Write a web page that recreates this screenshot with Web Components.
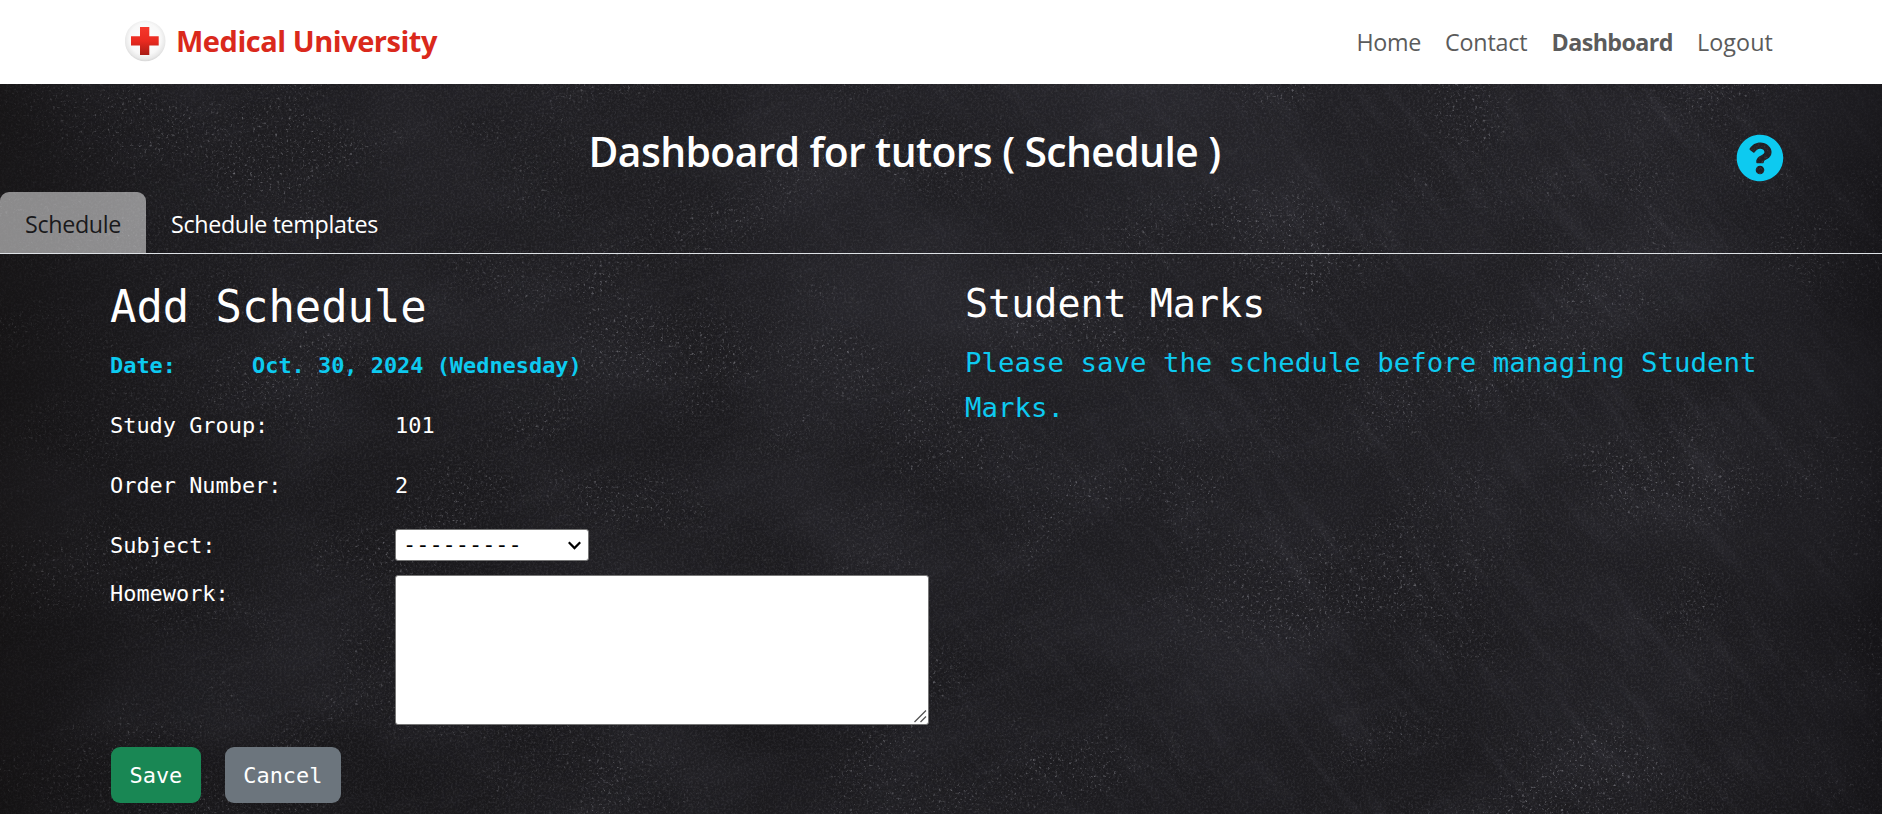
<!DOCTYPE html>
<html lang="en">
<head>
<meta charset="utf-8">
<title>Medical University</title>
<style>
  html, body { margin: 0; height: 100%; overflow: hidden; background: #1e1d21; }
  body { font-family: "Open Sans", "Noto Sans", sans-serif; font-size: 23.3px; color: #fff; }
</style>
</head>
<body>
<mu-page>
  <mu-header slot="header"></mu-header>
  <mu-title></mu-title>
  <mu-tabs></mu-tabs>
  <mu-columns>
    <mu-schedule-form slot="left"></mu-schedule-form>
    <mu-marks slot="right"></mu-marks>
  </mu-columns>
</mu-page>
<script>
const define = (name, html, after) => {
  const template = document.createElement('template');
  template.innerHTML = html;
  customElements.define(name, class extends HTMLElement {
    constructor() {
      super();
      this.attachShadow({ mode: 'open' }).append(template.content.cloneNode(true));
    }
    connectedCallback() { if (after) after(this); }
  });
};

/* Inline label that spreads its letters over a given advance width. */
define('fit-text', `<style>
  :host { display: inline-block; white-space: pre; }
  span { display: inline-block; }
</style><span><slot></slot></span>`, host => {
  const want = parseFloat(host.getAttribute('width'));
  const natural = host.shadowRoot.querySelector('span').getBoundingClientRect().width;
  const count = host.textContent.length;
  if (want && natural && count) host.style.letterSpacing = ((want - natural) / count) + 'px';
});

/* Chalkboard surface: soft smudges, diagonal streaks and chalk dust. */
define('chalk-board', `<style>
  :host { display: block; overflow: hidden; background: #1e1d21; }
  svg { display: block; width: 1882px; height: 730px; }
</style>
<svg viewBox="0 0 1882 730" aria-hidden="true">
  <defs>
    <filter id="grain" x="0" y="0" width="100%" height="100%" color-interpolation-filters="sRGB">
      <feTurbulence type="fractalNoise" baseFrequency=".45" numOctaves="3" seed="4"/>
      <feColorMatrix values="0 0 0 0 .55  0 0 0 0 .55  0 0 0 0 .58  .9 0 0 0 -.38"/>
    </filter>
    <filter id="dust" x="0" y="0" width="100%" height="100%" color-interpolation-filters="sRGB">
      <feTurbulence type="fractalNoise" baseFrequency=".36" numOctaves="2" seed="21" result="n"/>
      <feColorMatrix in="n" values="0 0 0 0 .66  0 0 0 0 .66  0 0 0 0 .69  3.4 0 0 0 -2.1" result="dots"/>
      <feTurbulence type="fractalNoise" baseFrequency=".006 .009" numOctaves="4" seed="8"/>
      <feColorMatrix values="0 0 0 0 1  0 0 0 0 1  0 0 0 0 1  3.2 0 0 0 -1.25" result="mask"/>
      <feComposite in="dots" in2="mask" operator="in"/>
    </filter>
    <filter id="smudge" x="0" y="0" width="100%" height="100%" color-interpolation-filters="sRGB">
      <feTurbulence type="fractalNoise" baseFrequency=".004 .006" numOctaves="4" seed="31"/>
      <feColorMatrix values="0 0 0 0 .42  0 0 0 0 .42  0 0 0 0 .48  .7 0 0 0 -.27"/>
    </filter>
    <filter id="streak" x="0" y="0" width="100%" height="100%" color-interpolation-filters="sRGB">
      <feTurbulence type="fractalNoise" baseFrequency=".011 .07" numOctaves="4" seed="13"/>
      <feColorMatrix values="0 0 0 0 .5  0 0 0 0 .5  0 0 0 0 .56  .7 0 0 0 -.33"/>
    </filter>
    <linearGradient id="edge">
      <stop offset="0" stop-color="#100e0e" stop-opacity=".6"/>
      <stop offset=".1" stop-color="#121113" stop-opacity=".2"/>
      <stop offset=".3" stop-color="#121113" stop-opacity=".1"/>
      <stop offset=".6" stop-color="#2a2a31" stop-opacity=".2"/>
      <stop offset=".9" stop-color="#222127" stop-opacity=".1"/>
      <stop offset="1" stop-color="#100f12" stop-opacity=".6"/>
    </linearGradient>
    <linearGradient id="fade">
      <stop offset=".35" stop-color="#000"/><stop offset=".7" stop-color="#fff"/>
    </linearGradient>
    <mask id="right"><rect width="1882" height="730" fill="url(#fade)"/></mask>
    <linearGradient id="base" x2="0" y2="1">
      <stop offset="0" stop-color="#201f23"/><stop offset="1" stop-color="#19181b"/>
    </linearGradient>
  </defs>
  <rect width="1882" height="730" fill="url(#base)"/>
  <rect width="1882" height="730" filter="url(#smudge)" opacity=".45"/>
  <g transform="rotate(-20 500 365)" opacity=".13"><rect x="-400" y="-300" width="1700" height="1400" filter="url(#streak)"/></g>
  <g mask="url(#right)"><g transform="rotate(52 1400 365)" opacity=".3"><rect x="550" y="-500" width="1700" height="1700" filter="url(#streak)"/></g></g>
  <rect width="1882" height="730" filter="url(#grain)" opacity=".45"/>
  <rect width="1882" height="730" filter="url(#dust)" opacity=".7"/>
  <rect width="1882" height="730" fill="url(#edge)"/>
</svg>`);

define('mu-page', `<style>
  :host { display: grid; grid-template: 84px 730px / 1882px; height: 814px; overflow: hidden; }
  chalk-board, main { grid-area: 2 / 1; min-width: 0; }
  main { z-index: 1; }
</style>
<slot name="header"></slot><chalk-board></chalk-board><main><slot></slot></main>`);

define('mu-logo', `<style>:host { display: block; width: 42px; height: 42px; } svg { display: block; }</style>
<svg width="42" height="42" viewBox="0 0 42 42" aria-hidden="true">
  <defs>
    <radialGradient id="ball" cx=".5" cy=".45" r=".54">
      <stop offset="0" stop-color="#fff"/><stop offset=".72" stop-color="#f8f8f8"/>
      <stop offset=".92" stop-color="#e8e8e8"/><stop offset="1" stop-color="#dadada"/>
    </radialGradient>
    <linearGradient id="cross" x2="0" y2="1">
      <stop offset="0" stop-color="#f5372b"/><stop offset=".5" stop-color="#ea2a20"/><stop offset="1" stop-color="#a91c15"/>
    </linearGradient>
  </defs>
  <circle cx="20.2" cy="20.9" r="20.3" fill="url(#ball)"/>
  <path d="M15 7h9.3v9.2h9.4v9.2h-9.4V35H15v-9.6H6v-9.2h9z" fill="url(#cross)"/>
</svg>`);

define('mu-header', `<style>
  :host { display: flex; box-sizing: border-box; height: 84px; padding: 0 109px 0 125px; background: #fff; color: #5b5b5b; }
  .brand { display: flex; align-items: flex-start; color: #da291c; font-weight: 700; font-size: 29px; line-height: 42px; padding-top: 20px; gap: 9px; }
  nav { display: flex; gap: 24px; margin-left: auto; line-height: 84px; }
  b { font-weight: 700; }
</style>
<div class="brand"><mu-logo></mu-logo><fit-text width="261">Medical University</fit-text></div>
<nav><fit-text width="64.5">Home</fit-text><fit-text width="82.5">Contact</fit-text><b><fit-text width="121.5">Dashboard</fit-text></b><fit-text width="76">Logout</fit-text></nav>`);

define('mu-title', `<style>
  :host { display: flex; height: 108px; box-sizing: border-box; padding: 42px 98px 0 588.5px; justify-content: space-between; }
  h1 { margin: 0; font-size: 40.8px; font-weight: 600; line-height: 51px; }
  svg { display: block; margin-top: 8px; }
</style>
<h1><fit-text width="632">Dashboard for tutors ( Schedule )</fit-text></h1>
<svg width="48" height="48" viewBox="0 0 512 512" aria-label="Help"><path fill="#0dcaf0" d="M504 256c0 136.997-111.043 248-248 248S8 392.997 8 256C8 119.083 119.043 8 256 8s248 111.083 248 248zM262.655 90c-54.497 0-89.255 22.957-116.549 63.758-3.536 5.286-2.353 12.415 2.715 16.258l34.699 26.31c5.205 3.947 12.621 3.008 16.665-2.122 17.864-22.658 30.113-35.797 57.303-35.797 20.429 0 45.698 13.148 45.698 32.958 0 14.976-12.363 22.667-32.534 33.976C247.128 238.528 216 254.941 216 296v4c0 6.627 5.373 12 12 12h56c6.627 0 12-5.373 12-12v-1.333c0-28.462 83.186-29.647 83.186-106.667 0-58.002-60.165-102-116.531-102zM256 338c-25.365 0-46 20.635-46 46 0 25.364 20.635 46 46 46s46-20.636 46-46c0-25.365-20.635-46-46-46z"/></svg>`);

define('mu-tabs', `<style>
  :host { display: flex; height: 62px; box-sizing: border-box; border-bottom: 1px solid #dee2e6; line-height: 34px; }
  div { box-sizing: border-box; height: 61px; padding: 15px 25px 0; }
  .on { width: 146px; background: rgba(255,255,255,.5); color: #19191b; border-radius: 9px 9px 0 0; }
</style>
<div class="on"><fit-text width="96">Schedule</fit-text></div><div><fit-text width="207">Schedule templates</fit-text></div>`);

define('mu-columns', `<style>
  :host { display: grid; grid-template-columns: 819px 810px; column-gap: 36px; padding: 24px 0 0 110px;
    font-family: "DejaVu Sans Mono", monospace; font-size: 21.925px; line-height: 38px; }
</style>
<slot name="left"></slot><slot name="right"></slot>`);

define('mu-row', `<style>
  :host { display: grid; grid-template-columns: 285px 1fr; height: 36px; padding: 12px 0; }
  :host([date]) { grid-template-columns: 142px 1fr; color: #0dcaf0; font-weight: 700; }
  :host([flush]) { padding: 0; height: 150px; }
</style><span><slot name="label"></slot></span><div><slot></slot></div>`);

define('mu-select', `<style>
  :host { display: flex; box-sizing: border-box; width: 194px; height: 32px; margin-top: 2px; padding: 0 7px 0 7px; align-items: center;
    justify-content: space-between; color: #000; background: #fff; border: 1px solid #767676; border-radius: 3px; line-height: 30px; }
  svg { display: block; }
</style><slot></slot><svg width="13" height="9" viewBox="0 0 13 9"><path d="M.8 1.2 6.5 7.1 12.2 1.2" fill="none" stroke="#000" stroke-width="2.2"/></svg>`);

define('mu-textarea', `<style>
  :host { display: flex; box-sizing: border-box; width: 534px; height: 150px; padding: 0 1px 1px 0; align-items: flex-end; justify-content: flex-end;
    background: #fff; border: 1px solid #767676; border-radius: 3px; }
</style><svg width="14" height="14" viewBox="0 0 14 14"><path d="M1.5 13 13 1.5M7.5 13 13 7.5" stroke="#555" stroke-width="1.3" fill="none"/></svg>`);

define('mu-button', `<style>
  :host { display: block; box-sizing: border-box; height: 56px; padding: 10px 18.5px 0; border-radius: 9px; background: #198754; line-height: 37px; }
  :host([kind=secondary]) { background: #6c757d; }
</style><slot></slot>`);

define('mu-schedule-form', `<style>
  :host { display: block; }
  h2 { margin: 0; font-weight: 400; font-size: 43.85px; line-height: 57px; }
  footer { display: flex; gap: 24px; padding: 22px 0 0 1px; }
</style>
<h2>Add Schedule</h2>
<mu-row date><span slot="label">Date:</span>Oct. 30, 2024 (Wednesday)</mu-row>
<mu-row><span slot="label">Study Group:</span>101</mu-row>
<mu-row><span slot="label">Order Number:</span>2</mu-row>
<mu-row><span slot="label">Subject:</span><mu-select>---------</mu-select></mu-row>
<mu-row flush><span slot="label">Homework:</span><mu-textarea></mu-textarea></mu-row>
<footer><mu-button>Save</mu-button><mu-button kind="secondary">Cancel</mu-button></footer>`);

define('mu-marks', `<style>
  :host { display: block; }
  h3 { margin: 0 0 11px; font-weight: 400; font-size: 38.37px; line-height: 51px; }
  p { margin: 0; font-size: 27.4px; line-height: 45px; color: #0dcaf0; }
</style>
<h3>Student Marks</h3><p>Please save the schedule before managing Student Marks.</p>`);
</script>
</body>
</html>
